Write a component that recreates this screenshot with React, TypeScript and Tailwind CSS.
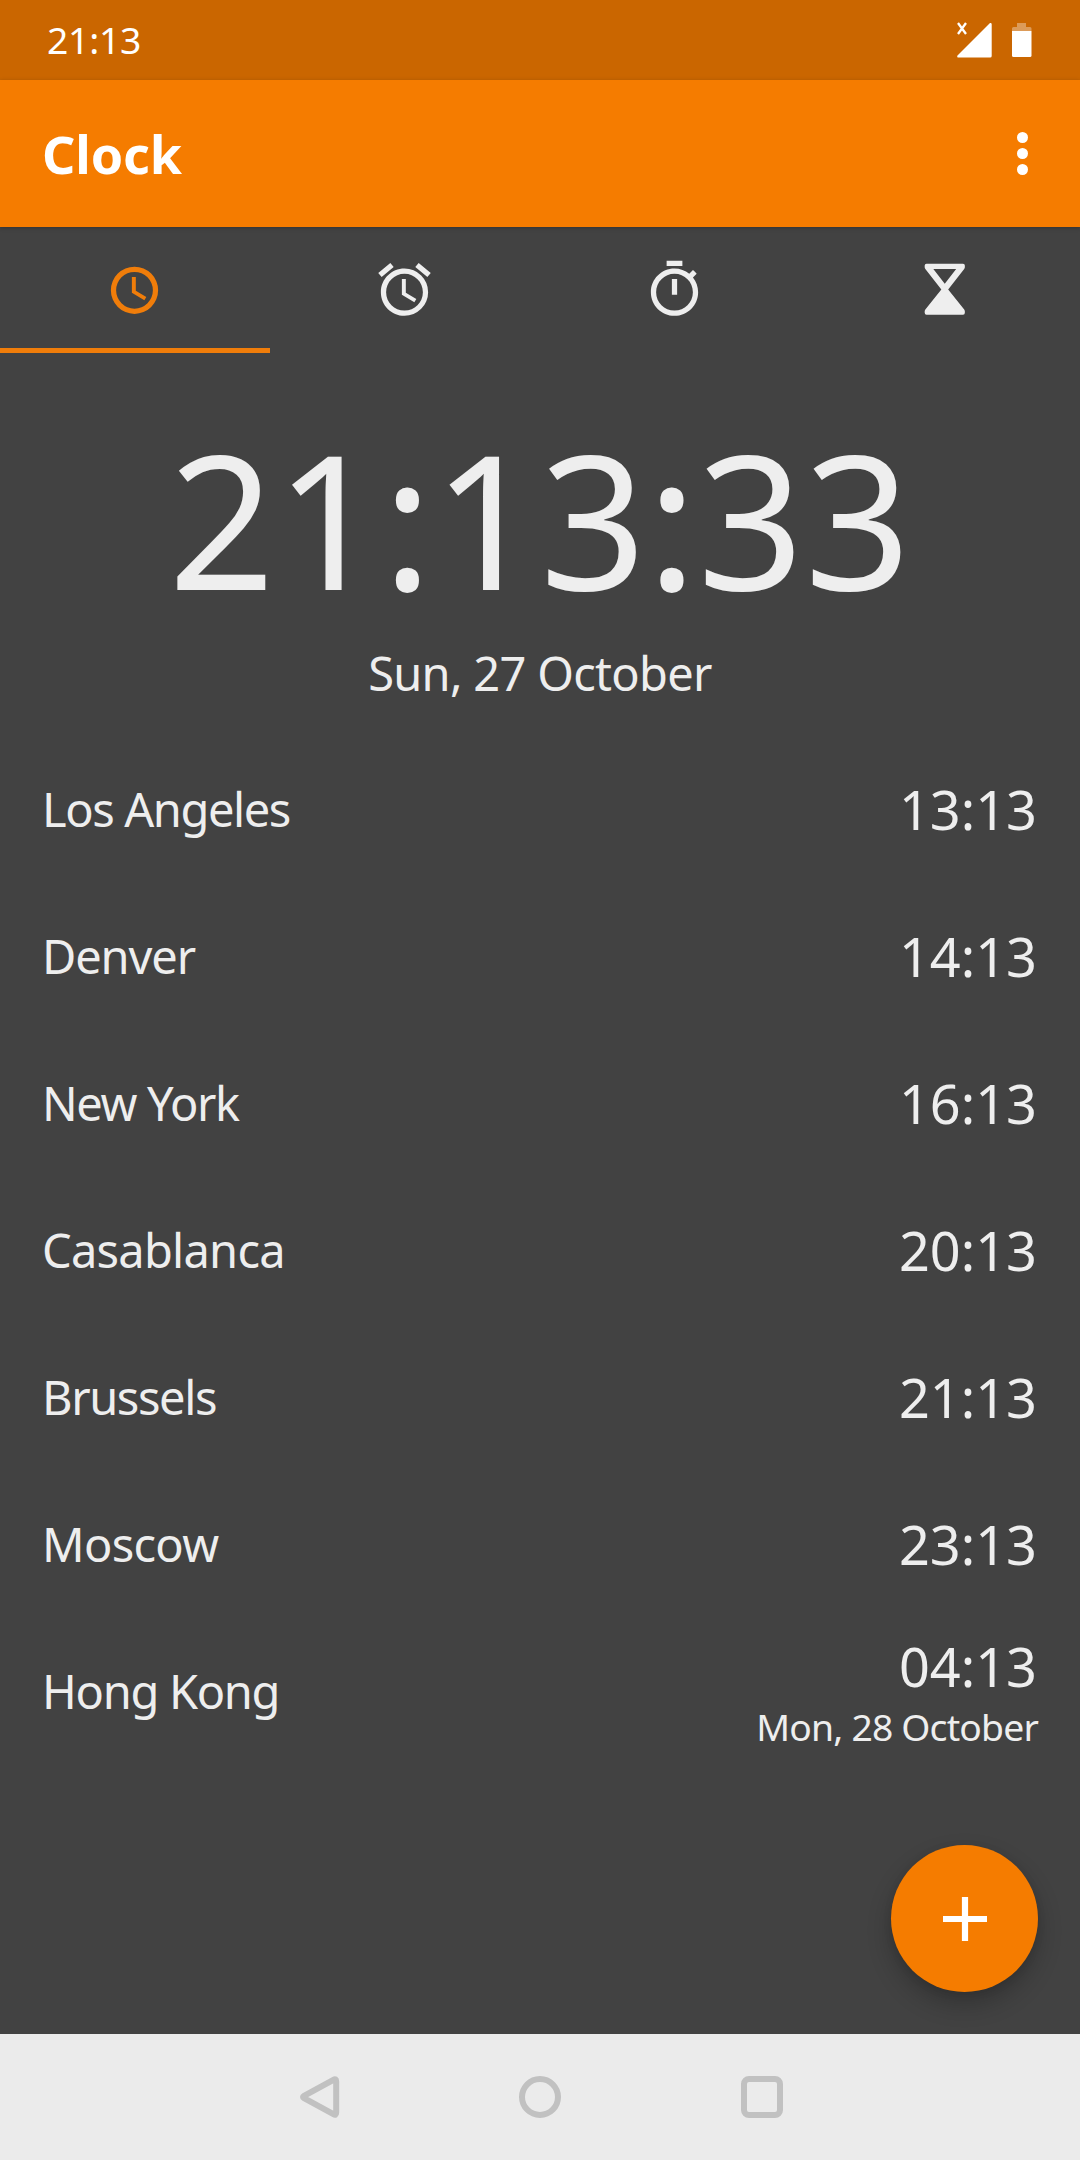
import type { ReactNode } from "react";

type City = { name: string; time: string; date?: string; tracking: string };

const cities: City[] = [
  { name: "Los Angeles", time: "13:13", tracking: "tracking-[-1.41px]" },
  { name: "Denver", time: "14:13", tracking: "tracking-[-1.1px]" },
  { name: "New York", time: "16:13", tracking: "tracking-[-1.35px]" },
  { name: "Casablanca", time: "20:13", tracking: "tracking-[-0.75px]" },
  { name: "Brussels", time: "21:13", tracking: "tracking-[-1.39px]" },
  { name: "Moscow", time: "23:13", tracking: "tracking-[-0.7px]" },
  { name: "Hong Kong", time: "04:13", date: "Mon, 28 October", tracking: "tracking-[-1.3px]" },
];

function StatusBar() {
  return (
    <div className="flex h-[80px] shrink-0 items-center justify-between bg-[#ca6600] pl-[47px] pr-[48px] text-white">
      <span className="text-[37.3px] leading-[80px] tracking-[-0.25px]">21:13</span>
      <div className="flex items-center gap-[20px]">
        <svg width="36" height="36" viewBox="0 0 36 36" fill="none">
          <path d="M2 1 L10 12 M10 1 L2 12" stroke="#fff" strokeWidth="2.3" />
          <path d="M34 1 a1.400 1.400 0 0 1 1.700 1.300 V34 a1.600 1.600 0 0 1 -1.600 1.600 H2.400 a1.200 1.200 0 0 1 -.9 -2 Z" fill="#fff" />
        </svg>
        <svg width="20" height="36" viewBox="0 0 20 36">
          <path d="M5 1 H14 V5 H18 a1.500 1.500 0 0 1 1.500 1.500 V9 H0 V6.500 A1.500 1.500 0 0 1 1.500 5 H5 Z" fill="#fff" fillOpacity=".35" />
          <path d="M0 9 H19.500 V33.500 A1.500 1.500 0 0 1 18 35 H1.500 A1.500 1.500 0 0 1 0 33.500 Z" fill="#fff" />
        </svg>
      </div>
    </div>
  );
}

function AppBar() {
  return (
    <header className="relative z-10 flex h-[147px] shrink-0 items-center justify-between bg-[#f57c00] pl-[42px] pr-[52px] text-white shadow-[0_1px_4px_rgba(0,0,0,0.25)]">
      <h1 className="text-[52px] font-bold leading-[147px] tracking-[-0.1px]">Clock</h1>
      <div className="flex flex-col gap-[5px]">
        <span className="size-[11px] rounded-full bg-white" />
        <span className="size-[11px] rounded-full bg-white" />
        <span className="size-[11px] rounded-full bg-white" />
      </div>
    </header>
  );
}

function Tab({ active, children }: { active?: boolean; children: ReactNode }) {
  return (
    <div
      className={
        active
          ? "flex items-start justify-center border-b-[5px] border-[#f07d0a] pr-[2px] pt-[31px] text-[#f07d0a]"
          : "flex items-start justify-center pr-[2px] pt-[31px] text-[#eeeeee]"
      }
    >
      <svg width="63" height="63" viewBox="0 0 24 24" fill="currentColor">
        {children}
      </svg>
    </div>
  );
}

function Tabs() {
  return (
    <nav className="grid h-[126px] shrink-0 grid-cols-4">
      <Tab active>
        <path d="M12 3.300a9 9 0 1 0 0 18 9 9 0 0 0 0-18zm0 16a7 7 0 1 1 0-14 7 7 0 0 1 0 14zM12.500 7.200H11v6l4.750 2.850.750-1.230-4-2.370z" />
      </Tab>
      <Tab>
        <path d="M22 5.720l-4.600-3.860-1.290 1.530 4.600 3.860L22 5.720zM7.880 3.390L6.600 1.860 2 5.710l1.290 1.530 4.590-3.850zM12.500 8H11v6l4.750 2.850.750-1.230-4-2.370V8zM12 4c-4.970 0-9 4.030-9 9s4.020 9 9 9a9 9 0 0 0 0-18zm0 16c-3.870 0-7-3.130-7-7s3.130-7 7-7 7 3.130 7 7-3.130 7-7 7z" />
      </Tab>
      <Tab>
        <path d="M15 1H9v2h6V1zm-4 13h2V8h-2v6zm8.030-6.610l1.420-1.420c-.43-.51-.9-.99-1.410-1.410l-1.420 1.420C16.070 4.740 14.120 4 12 4c-4.970 0-9 4.030-9 9s4.020 9 9 9 9-4.030 9-9c0-2.120-.74-4.070-1.970-5.610zM12 20c-3.870 0-7-3.130-7-7s3.130-7 7-7 7 3.130 7 7-3.130 7-7 7z" />
      </Tab>
      <Tab>
        <path
          fillRule="evenodd"
          d="M5.150 2.200H19.050Q19.750 2.200 19.750 2.900V3.500Q19.750 3.800 19.500 4.150L13.400 12L19.500 19.600Q19.750 19.950 19.750 20.300V20.900Q19.750 21.600 19.050 21.600H5.150Q4.450 21.600 4.450 20.900V20.300Q4.450 19.950 4.700 19.600L10.800 12L4.700 4.150Q4.450 3.800 4.450 3.500V2.900Q4.450 2.200 5.150 2.200ZM7.750 4.200L12.100 9.850L16.450 4.200Z"
        />
      </Tab>
    </nav>
  );
}

function CityRow({ city }: { city: City }) {
  return (
    <li className="flex h-[147px] items-center justify-between pl-[42px] pr-[43px]">
      <span className={`pt-[2px] text-[47px] leading-[147px] ${city.tracking}`}>{city.name}</span>
      {city.date ? (
        <div className="flex flex-col items-end gap-[5px] pt-[6px]">
          <span className="text-[54px] leading-[60px]">{city.time}</span>
          <span className="-mr-[1px] text-[37.3px] leading-[51px] tracking-[-0.82px]">{city.date}</span>
        </div>
      ) : (
        <span className="text-[54px] leading-[60px]">{city.time}</span>
      )}
    </li>
  );
}

function NavigationBar() {
  return (
    <footer className="flex h-[126px] shrink-0 items-center justify-center gap-[178px] bg-[#ebebeb] text-[#c1c1c1]">
      <svg width="44" height="44" viewBox="0 0 44 44" fill="none" stroke="currentColor" strokeWidth="6" strokeLinejoin="round">
        <path d="M40.200 6.500 Q40.200 3.200 37.400 4.800 L8 20.800 Q6 22 8 23.200 L37.400 39.200 Q40.200 40.800 40.200 37.500 Z" />
      </svg>
      <svg width="44" height="44" viewBox="0 0 44 44" fill="none" stroke="currentColor" strokeWidth="6">
        <circle cx="22" cy="22" r="18" />
      </svg>
      <svg width="44" height="44" viewBox="0 0 44 44" fill="none" stroke="currentColor" strokeWidth="6">
        <rect x="4" y="4" width="36" height="36" rx="5" />
      </svg>
    </footer>
  );
}

export default function App() {
  return (
    <div className="flex h-[2160px] w-[1080px] flex-col overflow-hidden bg-[#424242] font-['Noto_Sans',sans-serif] text-[#eeeeee]">
      <StatusBar />
      <AppBar />
      <Tabs />
      <main className="relative flex-1 overflow-hidden pt-[65px]">
        <div className="flex flex-col items-center">
          <div className="text-[186px] leading-[200px] tracking-[0.6px]">21:13:33</div>
          <div className="mt-[23px] text-[47px] leading-[64px] tracking-[-0.7px]">Sun, 27 October</div>
        </div>
        <ul className="mt-[30px]">
          {cities.map((city) => (
            <CityRow key={city.name} city={city} />
          ))}
        </ul>
        <button
          aria-label="Add city"
          className="absolute bottom-[42px] right-[42px] flex size-[147px] items-center justify-center rounded-full bg-[#f57c00] shadow-[0_12px_24px_rgba(0,0,0,0.24),0_2px_8px_rgba(0,0,0,0.08)]"
        >
          <svg width="44" height="44" viewBox="0 0 44 44" fill="#fff">
            <path d="M18.900 0h6.200v18.900H44v6.200H25.100V44h-6.200V25.100H0v-6.200h18.900z" />
          </svg>
        </button>
      </main>
      <NavigationBar />
    </div>
  );
}
